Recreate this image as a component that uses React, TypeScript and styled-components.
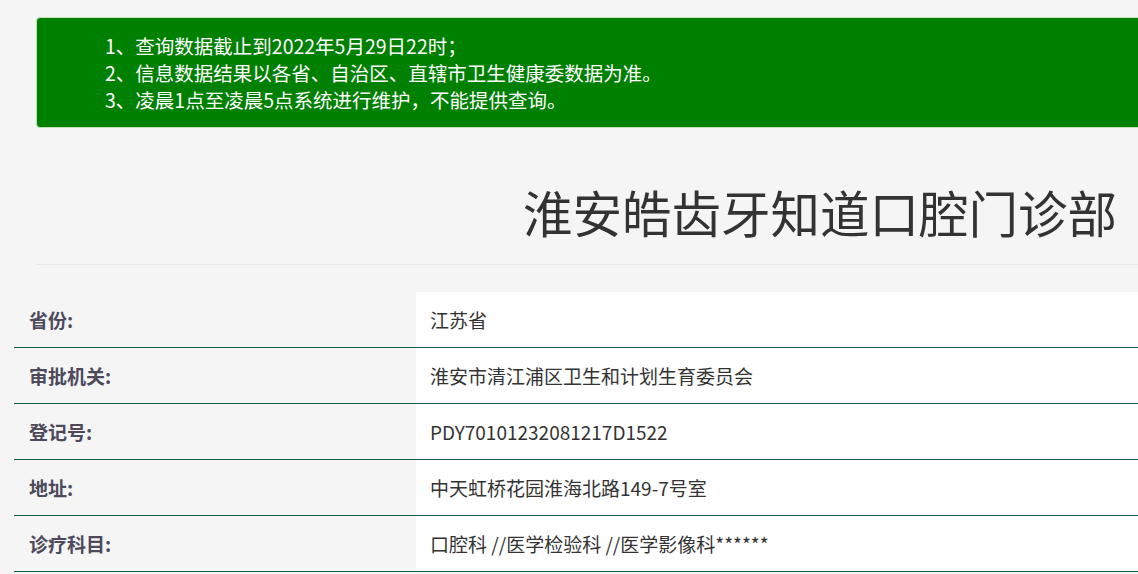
import React from "react";
import styled, { createGlobalStyle } from "styled-components";

const Global = createGlobalStyle`
  html, body {
    margin: 0;
    padding: 0;
    background: #f5f5f5;
    overflow: hidden;
  }
  body {
    font-family: "Noto Sans CJK SC", "Noto Sans", sans-serif;
  }
`;

const Page = styled.div`
  padding-top: 17px;
  width: 1160px;
`;

const Notice = styled.div`
  margin-left: 36px;
  background: #008000;
  border: 1px solid #bfe3b4;
  border-radius: 4px;
  padding: 14px 0 14px 68px;
  color: #ffffff;
  font-size: 19.5px;
  line-height: 27px;
`;

const NoticeLine = styled.div`
  white-space: nowrap;
`;

const Title = styled.h1`
  margin: 49px 43px 17px 0;
  text-align: right;
  font-size: 49.5px;
  line-height: 70px;
  font-weight: 400;
  color: #333333;
`;

const Rule = styled.hr`
  margin: 0 0 27px 36px;
  border: 0;
  border-top: 1px solid #e9e9e9;
`;

const Table = styled.div`
  margin-left: 14px;
  display: flex;
  flex-direction: column;
`;

const Row = styled.div`
  display: grid;
  grid-template-columns: 402px 1fr;
  height: 55px;
  border-bottom: 1px solid #165c43;
`;

const Label = styled.div`
  display: flex;
  align-items: center;
  padding-left: 15px;
  font-size: 19px;
  font-weight: 700;
  color: #4d4a5c;
`;

const Value = styled.div`
  display: flex;
  align-items: center;
  padding-left: 14px;
  background: #ffffff;
  font-size: 19px;
  color: #333333;
  white-space: nowrap;
`;

const notices = [
  "1、查询数据截止到2022年5月29日22时；",
  "2、信息数据结果以各省、自治区、直辖市卫生健康委数据为准。",
  "3、凌晨1点至凌晨5点系统进行维护，不能提供查询。",
];

const rows: [string, string][] = [
  ["省份:", "江苏省"],
  ["审批机关:", "淮安市清江浦区卫生和计划生育委员会"],
  ["登记号:", "PDY70101232081217D1522"],
  ["地址:", "中天虹桥花园淮海北路149-7号室"],
  ["诊疗科目:", "口腔科 //医学检验科 //医学影像科******"],
];

export default function App() {
  return (
    <>
      <Global />
      <Page>
        <Notice>
          {notices.map((n) => (
            <NoticeLine key={n}>{n}</NoticeLine>
          ))}
        </Notice>
        <Title>淮安皓齿牙知道口腔门诊部</Title>
        <Rule />
        <Table>
          {rows.map(([l, v]) => (
            <Row key={l}>
              <Label>{l}</Label>
              <Value>{v}</Value>
            </Row>
          ))}
        </Table>
      </Page>
    </>
  );
}
